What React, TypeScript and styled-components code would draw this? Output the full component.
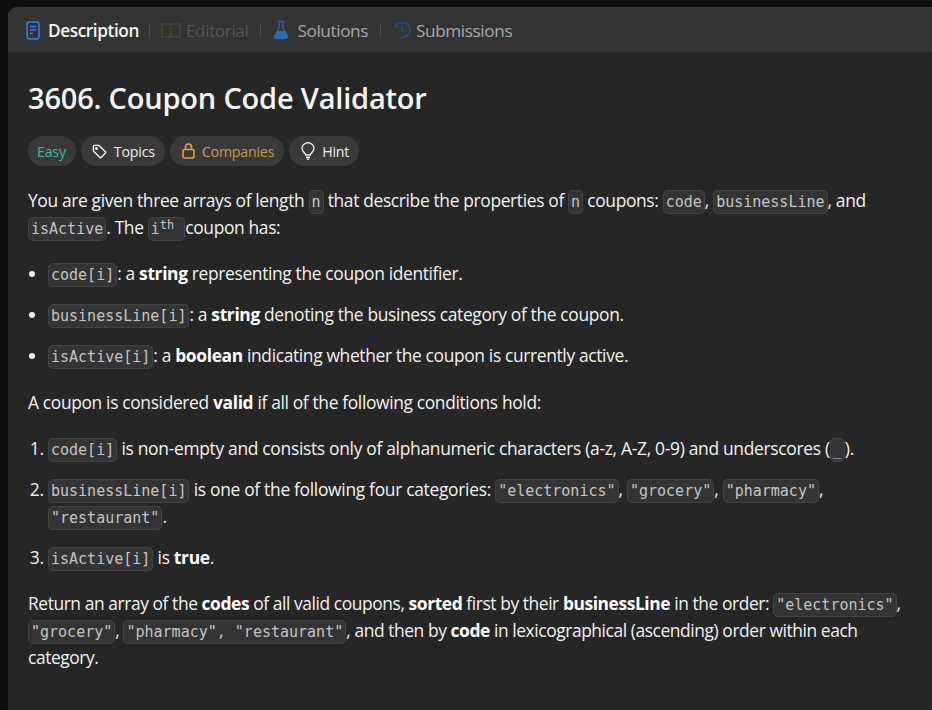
import * as React from "react";
import styled, { createGlobalStyle } from "styled-components";

const Global = createGlobalStyle`
	html, body { margin: 0; padding: 0; background: #0f0f0f; }
	body { height: 710px; overflow: hidden; font-family: "Open Sans", "Noto Sans", sans-serif; }
`;

const Panel = styled.div`
	margin: 7px 0 0 8px;
	height: 703px;
	background: #262626;
	border-radius: 9px 0 0 0;
	border-top: 1px solid #3c3c3c;
	box-sizing: border-box;
	overflow: hidden;
`;

const TabBar = styled.div`
	height: 44px;
	background: #333333;
	display: flex;
	align-items: center;
	padding-left: 18px;
	font-size: 17.2px;
`;

const Tab = styled.div<{ $color: string; $bold?: boolean; $gap: number }>`
	display: flex;
	align-items: center;
	gap: ${(p) => p.$gap}px;
	color: ${(p) => p.$color};
	font-weight: ${(p) => (p.$bold ? 600 : 400)};
	letter-spacing: -0.4px;
`;

const Sep = styled.div<{ $tight?: boolean }>`
	width: 1px;
	height: 15px;
	background: #4a4a4a;
	margin: ${(p) => (p.$tight ? "0 11px 0 10px" : "0 12px")};
`;

const Body = styled.div`
	padding: 26px 20px 0 20px;
	color: #f2f2f2;
	font-size: 17.4px;
	line-height: 27px;
	letter-spacing: -0.35px;
`;

const Title = styled.h1`
	margin: 0;
	font-size: 29px;
	line-height: 40px;
	font-weight: 600;
	color: #f5f5f5;
	letter-spacing: -0.2px;
`;

const Tags = styled.div`
	display: flex;
	gap: 5px;
	margin: 18px 0 21px;
`;

const Tag = styled.div<{ $color: string; $pad: number }>`
	height: 30px;
	display: flex;
	align-items: center;
	gap: 7px;
	padding: 0 10px 0 ${(p) => p.$pad}px;
	border-radius: 15px;
	background: #3a3a3a;
	color: ${(p) => p.$color};
	font-size: 14.2px;
	letter-spacing: -0.2px;
`;

const P = styled.p<{ $tight?: boolean }>`
	margin: 0;
	letter-spacing: ${(p) => (p.$tight ? "-0.42px" : "inherit")};
`;

const Code = styled.code`
	font-family: "DejaVu Sans Mono", monospace;
	font-size: 15px;
	line-height: 1;
	letter-spacing: 0;
	color: #c4c4c4;
	background: #343434;
	border: 1px solid #434343;
	border-radius: 5px;
	padding: 2px;
`;

const Sup = styled.sup`
	font-size: 12px;
	line-height: 0;
	vertical-align: 5px;
	margin-right: 8px;
`;

const Bullets = styled.ul`
	margin: 19px 0 20px;
	padding-left: 20px;
	list-style: disc;
	& li { margin-bottom: 14px; }
	& li:last-child { margin-bottom: 0; }
`;

const Numbers = styled.ol`
	margin: 19px 0;
	padding-left: 20px;
	letter-spacing: -0.3px;
	& li { margin-bottom: 14px; }
	& li:last-child { margin-bottom: 0; }
`;

const B = styled.strong`
	font-weight: 700;
	color: #ffffff;
`;

const Icon = styled.svg`
	flex: none;
	display: block;
`;

const DocIcon = () => (
	<Icon width="14" height="19" viewBox="0 0 14 19" fill="none" stroke="#2f80e0" strokeWidth="1.6">
		<rect x="1" y="1" width="12" height="17" rx="2.5" />
		<path d="M4 5.5h6M4 9h6M4 12.5h3" />
	</Icon>
);

const BookIcon = () => (
	<Icon width="20" height="15" viewBox="0 0 20 15" fill="none" stroke="#3e4a2a" strokeWidth="1.5">
		<path d="M1 1h7.5c.8 0 1.5.6 1.5 1.4V14H1zM19 1h-7.5c-.8 0-1.5.6-1.5 1.4V14h9z" />
	</Icon>
);

const FlaskIcon = () => (
	<Icon width="16" height="20" viewBox="0 0 16 20">
		<path d="M5 1.500h6M6 2v6L1.500 16c-.7 1.300 0 2.500 1.500 2.500h10c1.500 0 2.200-1.200 1.500-2.500L10 8V2" fill="none" stroke="#2d5f9e" strokeWidth="1.5" />
		<path d="M4.500 11h7l3 5.500c.4 1-.2 2-1.500 2H3c-1.300 0-1.900-1-1.500-2z" fill="#2d6cb5" />
	</Icon>
);

const HistoryIcon = () => (
	<Icon width="18" height="18" viewBox="0 0 18 18" fill="none" stroke="#1f4f80" strokeWidth="1.6">
		<path d="M2.500 2v4h4" />
		<path d="M2.800 5.800A7.500 7.500 0 1 1 9 16.500a7.500 7.500 0 0 1-3-.7" />
		<path d="M9 5v4.500l2.500 1.500" />
	</Icon>
);

const TagIcon = () => (
	<Icon width="15" height="15" viewBox="0 0 16 16" fill="none" stroke="#eeeeee" strokeWidth="1.5">
		<path d="M1.500 2.500c0-.6.4-1 1-1h5l6.800 6.800c.4.400.4 1 0 1.400l-4.600 4.600c-.4.400-1 .4-1.400 0L1.500 7.500z" strokeLinejoin="round" />
		<circle cx="4.800" cy="4.800" r=".8" fill="#eeeeee" />
	</Icon>
);

const LockIcon = () => (
	<Icon width="13" height="16" viewBox="0 0 13 16" fill="none" stroke="#e0a23c" strokeWidth="1.6">
		<rect x="1" y="6.500" width="11" height="8.500" rx="1.500" />
		<path d="M3.500 6.500V4a3 3 0 0 1 6 0v2.500" />
	</Icon>
);

const BulbIcon = () => (
	<Icon width="14" height="18" viewBox="0 0 14 18" fill="none" stroke="#eeeeee" strokeWidth="1.4">
		<path d="M4.800 13c0-1.500-3.800-3.200-3.800-6.700a6 5.500 0 0 1 12 0c0 3.500-3.800 5.200-3.800 6.700z" />
		<path d="M5 15.200h4M5.800 17h2.400" />
	</Icon>
);

export default function App() {
	return (
		<>
			<Global />
			<Panel>
				<TabBar>
					<Tab $color="#f5f5f5" $bold $gap={8}><DocIcon />Description</Tab>
					<Sep $tight />
					<Tab $color="#555555" $gap={5}><BookIcon />Editorial</Tab>
					<Sep />
					<Tab $color="#a8a8a8" $gap={8}><FlaskIcon />Solutions</Tab>
					<Sep />
					<Tab $color="#a8a8a8" $gap={5}><HistoryIcon />Submissions</Tab>
				</TabBar>
				<Body>
					<Title>3606. Coupon Code Validator</Title>
					<Tags>
						<Tag $color="#3fb2a6" $pad={9}>Easy</Tag>
						<Tag $color="#eeeeee" $pad={11}><TagIcon />Topics</Tag>
						<Tag $color="#c9983f" $pad={12}><LockIcon />Companies</Tag>
						<Tag $color="#eeeeee" $pad={12}><BulbIcon />Hint</Tag>
					</Tags>
					<P>
						You are given three arrays of length <Code>n</Code> that describe the properties of <Code>n</Code> coupons: <Code>code</Code>, <Code>businessLine</Code>, and <Code>isActive</Code>. The <Code>i<Sup>th</Sup></Code>coupon has:
					</P>
					<Bullets>
						<li><Code>code[i]</Code>: a <B>string</B> representing the coupon identifier.</li>
						<li><Code>businessLine[i]</Code>: a <B>string</B> denoting the business category of the coupon.</li>
						<li><Code>isActive[i]</Code>: a <B>boolean</B> indicating whether the coupon is currently active.</li>
					</Bullets>
					<P>A coupon is considered <B>valid</B> if all of the following conditions hold:</P>
					<Numbers>
						<li><Code>code[i]</Code> is non-empty and consists only of alphanumeric characters (a-z, A-Z, 0-9) and underscores (<Code>_</Code>).</li>
						<li><Code>businessLine[i]</Code> is one of the following four categories: <Code>"electronics"</Code>, <Code>"grocery"</Code>, <Code>"pharmacy"</Code>, <Code>"restaurant"</Code>.</li>
						<li><Code>isActive[i]</Code> is <B>true</B>.</li>
					</Numbers>
					<P $tight>
						Return an array of the <B>codes</B> of all valid coupons, <B>sorted</B> first by their <B>businessLine</B> in the order: <Code>"electronics"</Code>, <Code>"grocery"</Code>, <Code>"pharmacy", "restaurant"</Code>, and then by <B>code</B> in lexicographical (ascending) order within each category.
					</P>
				</Body>
			</Panel>
		</>
	);
}
